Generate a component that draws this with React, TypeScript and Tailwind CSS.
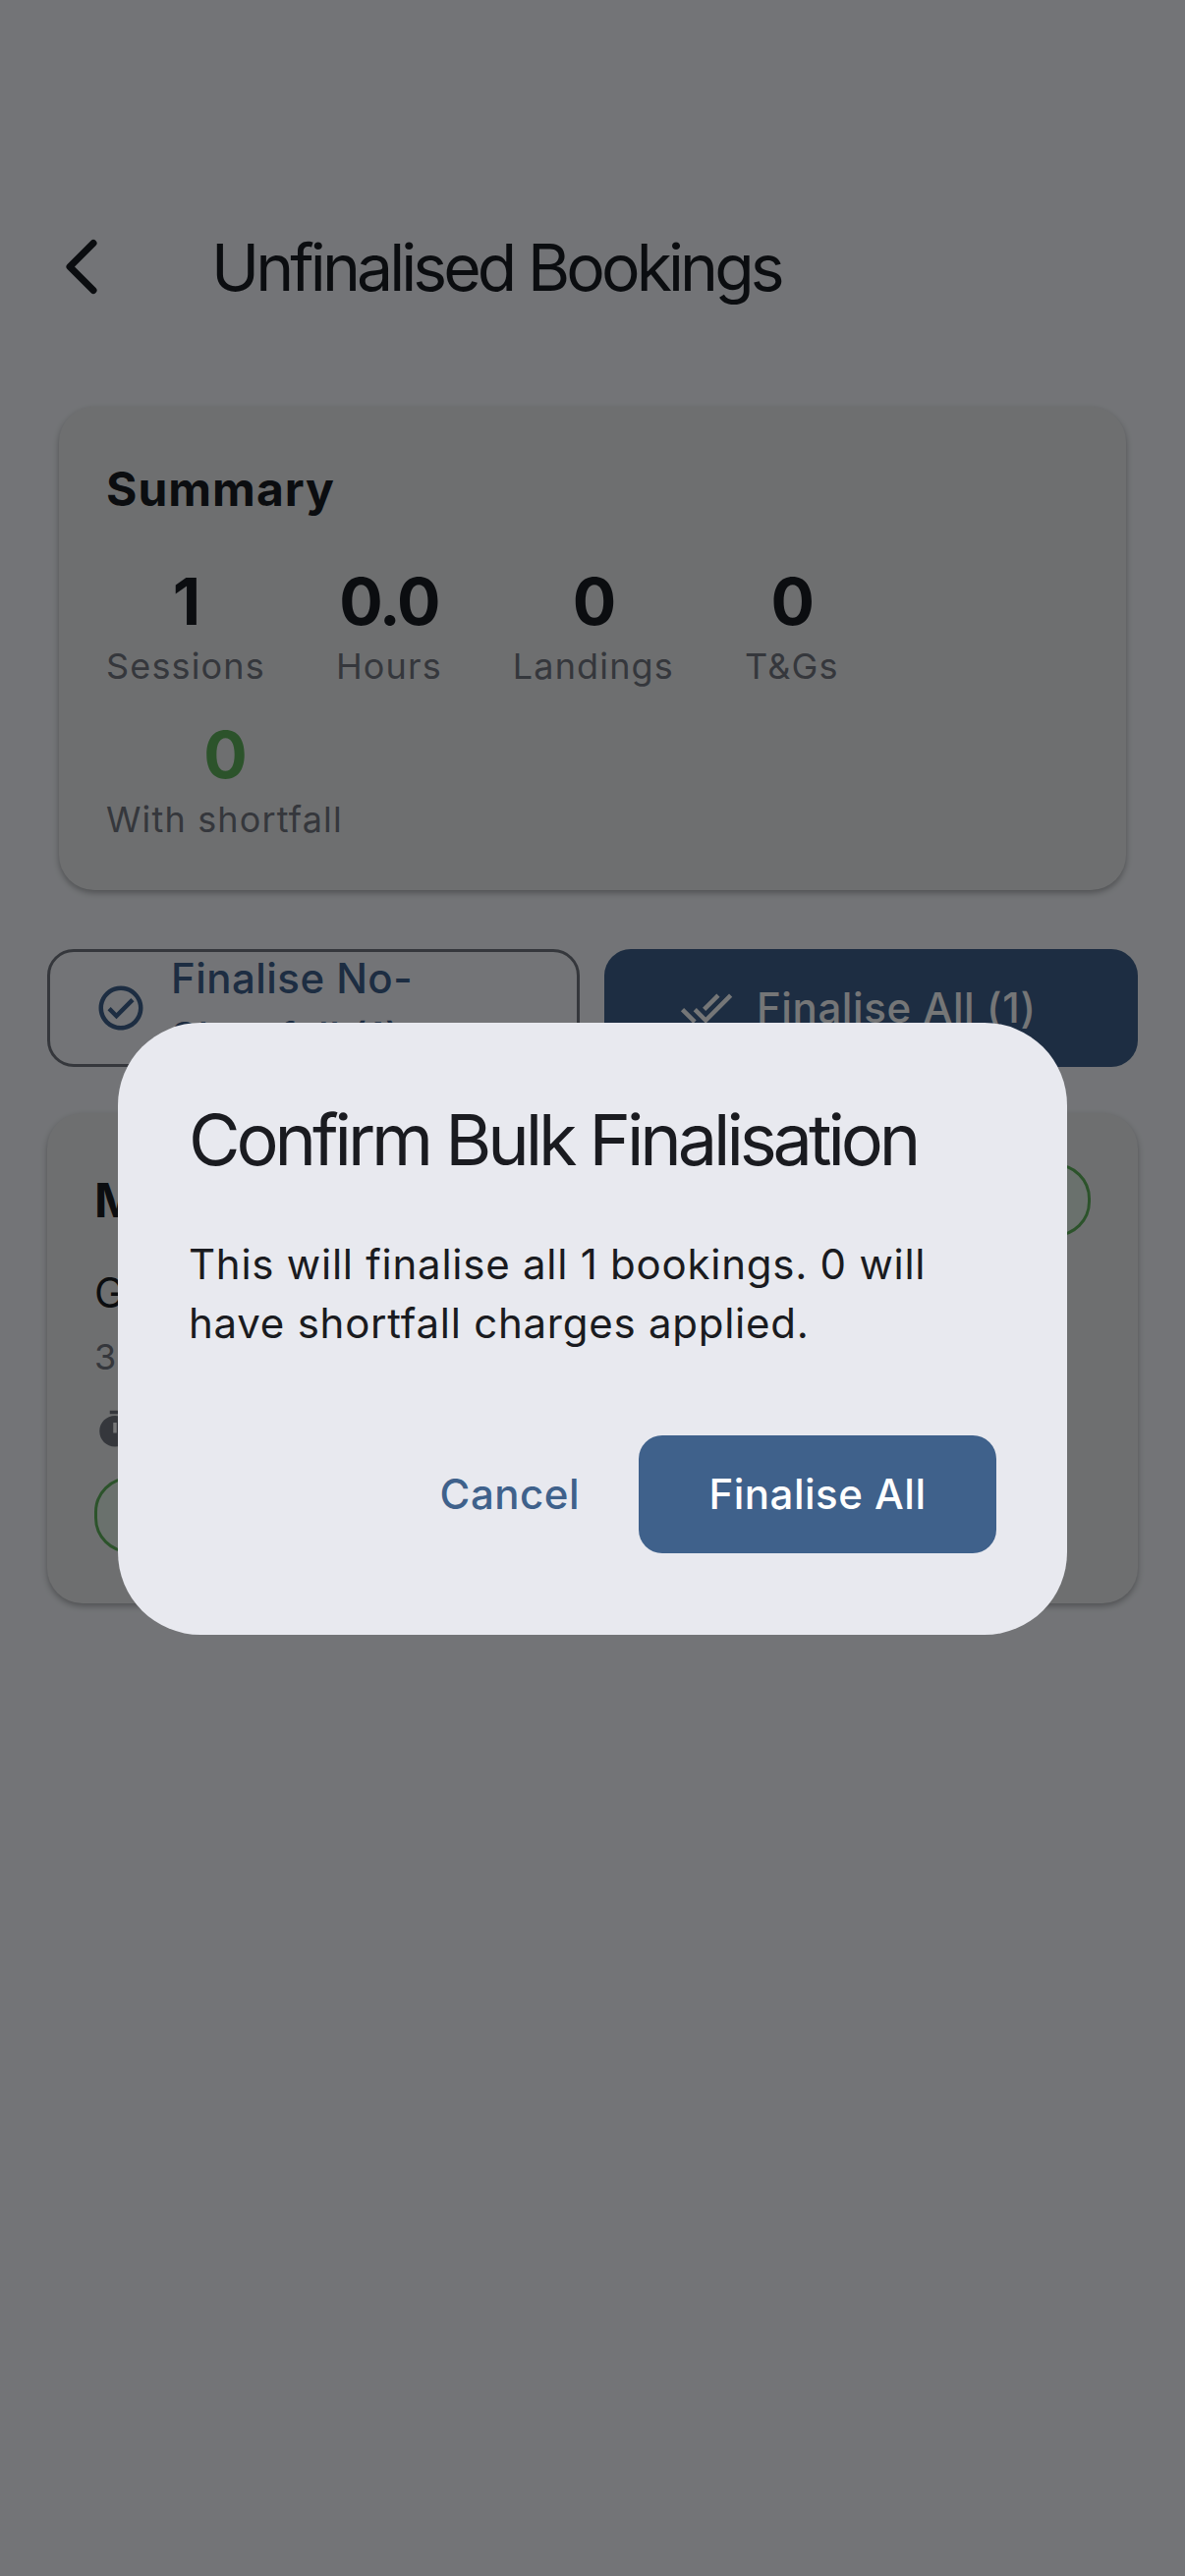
const CheckCircleIcon = () => (
  <svg viewBox="0 0 24 24" className="w-[54px] h-[54px] shrink-0 fill-[#3f618b]">
    <path d="M12 2C6.48 2 2 6.48 2 12s4.48 10 10 10 10-4.48 10-10S17.52 2 12 2zm0 18c-4.41 0-8-3.59-8-8s3.59-8 8-8 8 3.59 8 8-3.59 8-8 8zm4.59-12.42L10 14.17l-2.59-2.58L6 13l4 4 8-8z" />
  </svg>
);

const DoneAllIcon = () => (
  <svg viewBox="0 0 24 24" className="w-[54px] h-[54px] shrink-0 fill-white">
    <path d="M18 7l-1.41-1.41-6.34 6.34 1.41 1.41L18 7zm4.24-1.41L11.66 16.17 7.48 12l-1.41 1.41L11.66 19l12-12-1.42-1.41zM.41 13.41L6 19l1.41-1.41L1.83 12 .41 13.41z" />
  </svg>
);

const TimerIcon = () => (
  <svg viewBox="0 0 24 24" className="w-[42px] h-[42px] shrink-0 fill-[#74777f]">
    <path d="M15 1H9v2h6V1zm-4 13h2V8h-2v6zm8.03-6.61l1.42-1.42c-.43-.51-.9-.99-1.41-1.41l-1.42 1.42C16.07 4.74 14.12 4 12 4c-4.97 0-9 4.03-9 9s4.02 9 9 9 9-4.03 9-9c0-2.12-.74-4.07-1.97-5.61z" />
    <rect x="11" y="8" width="2" height="6" className="fill-white" />
  </svg>
);

function Stat({ value, label, green }: { value: string; label: string; green?: boolean }) {
  return (
    <div className="flex flex-col items-center">
      <span className={`text-[66px] leading-[84px] font-bold tracking-[-2px] ${green ? "text-[#60b35a]" : "text-[#1a1b20]"}`}>
        {value}
      </span>
      <span className="text-[36px] leading-[48px] tracking-[1.15px] text-[#74777f]">{label}</span>
    </div>
  );
}

export default function App() {
  return (
    <div className="relative w-[1206px] h-[2622px] overflow-hidden bg-[#fafbfe] font-[Inter,sans-serif]">
      <header className="flex items-center pt-[228px] h-[315px]">
        <div className="w-[215px] pl-[47px]">
          <svg viewBox="0 0 72 72" className="w-[72px] h-[72px] fill-none stroke-[#1a1b20] stroke-[7px]" strokeLinecap="round" strokeLinejoin="round">
            <path d="M48 11.5 24 35.5 48 59.5" />
          </svg>
        </div>
        <h1 className="text-[66px] leading-[90px] tracking-[-3.9px] text-[#1a1b20]">Unfinalised Bookings</h1>
      </header>

      <section className="mx-[60px] mt-[99px] rounded-[36px] bg-[#f0f0f0] p-[48px] shadow-[0_3px_6px_rgba(0,0,0,0.3)]">
        <h2 className="text-[48px] leading-[72px] font-bold tracking-[1px] text-[#1a1b20]">Summary</h2>
        <div className="mt-[36px] flex flex-wrap gap-x-[72px] gap-y-[24px]">
          <Stat value="1" label="Sessions" />
          <Stat value="0.0" label="Hours" />
          <Stat value="0" label="Landings" />
          <Stat value="0" label="T&Gs" />
          <Stat value="0" label="With shortfall" green />
        </div>
      </section>

      <div className="mx-[48px] mt-[60px] flex justify-between">
        <button className="w-[542px] h-[120px] flex items-center gap-[24px] pl-[45px] pr-[60px] rounded-[27px] border-[3px] border-[#74777f] text-left">
          <CheckCircleIcon />
          <span className="text-[42px] leading-[60px] font-medium tracking-[0.45px] text-[#3f618b]">Finalise No-Shortfall (1)</span>
        </button>
        <button className="w-[543px] h-[120px] flex items-center gap-[24px] pl-[77px] rounded-[27px] bg-[#3f618b] text-left">
          <DoneAllIcon />
          <span className="text-[42px] leading-[60px] font-medium tracking-[0.6px] text-white">Finalise All (1)</span>
        </button>
      </div>

      <section className="mx-[48px] mt-[47px] h-[499px] rounded-[36px] bg-[#f0f0f0] pl-[48px] pr-[48px] pt-[51px] shadow-[0_3px_6px_rgba(0,0,0,0.3)]">
        <div className="flex justify-between items-center">
          <span className="text-[48px] leading-[72px] font-bold text-[#1a1b20]">M</span>
          <div className="w-[160px] h-[75px] rounded-[36px] border-[3px] border-[#60b35a] bg-[#e8f5e9]" />
        </div>
        <p className="mt-[27px] text-[42px] leading-[60px] text-[#1a1b20]">G</p>
        <p className="mt-[5px] text-[36px] leading-[60px] text-[#74777f]">3</p>
        <div className="mt-[23px] flex items-center">
          <TimerIcon />
        </div>
        <div className="mt-[27px] w-[240px] h-[78px] rounded-[36px] border-[3px] border-[#60b35a] bg-[#e8f5e9]" />
      </section>

      <div className="absolute inset-0 bg-[#000104]/[0.54] flex justify-center items-start pt-[1041px]">
        <div className="w-[966px] rounded-[84px] bg-[#e8e9ef] px-[72px] pt-[71px] pb-[83px]">
          <h3 className="text-[72px] leading-[96px] tracking-[-4.1px] text-[#1a1b20]">Confirm Bulk Finalisation</h3>
          <p className="mt-[49px] text-[42px] leading-[60px] tracking-[0.75px] text-[#1a1b20]">
            This will finalise all 1 bookings. 0 will have shortfall charges applied.
          </p>
          <div className="mt-[84px] flex justify-end items-center gap-[24px]">
            <button className="px-[36px] text-[42px] leading-[60px] font-medium tracking-[0.5px] text-[#3f618b]">Cancel</button>
            <button className="w-[364px] h-[120px] rounded-[24px] bg-[#3f618b] text-[42px] leading-[60px] font-medium tracking-[0.5px] text-white">Finalise All</button>
          </div>
        </div>
      </div>
    </div>
  );
}
